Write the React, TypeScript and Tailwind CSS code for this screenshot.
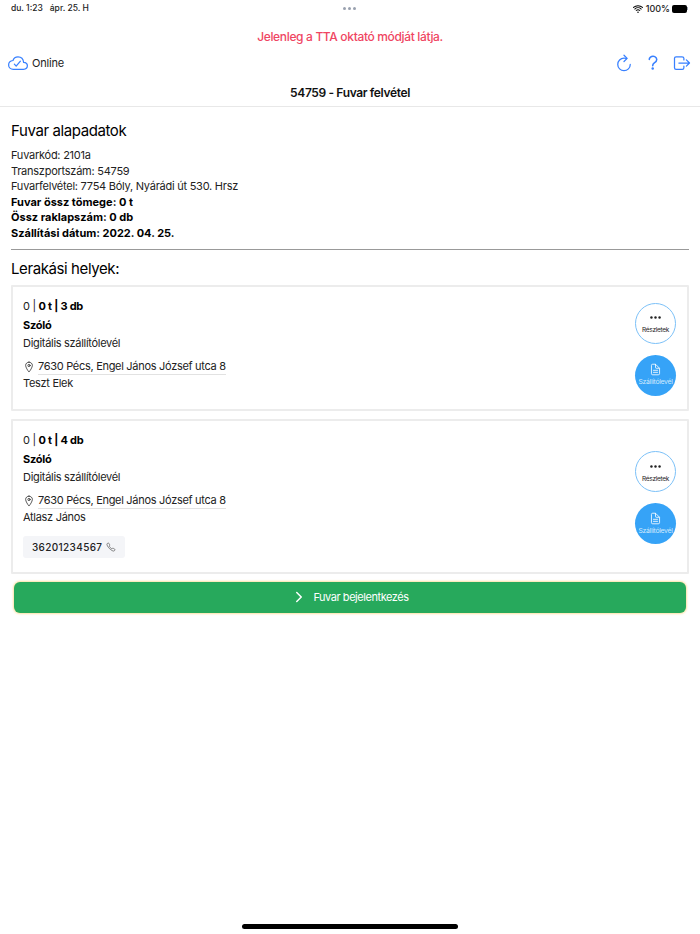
import React from "react";
import {
  IoCallOutline,
  IoChevronForward,
  IoCloudDoneOutline,
  IoDocumentTextOutline,
  IoEllipsisHorizontal,
  IoHelpOutline,
  IoLocationOutline,
  IoLogOutOutline,
  IoRefreshOutline,
  IoWifi,
} from "react-icons/io5";

function StatusBar() {
  return (
    <div className="flex h-[17px] items-center justify-between pl-[11px] pr-[12px] text-[8.5px] font-medium text-[#222]">
      <div className="flex w-[120px] gap-[7px]">
        <span>du. 1:23</span>
        <span>ápr. 25. H</span>
      </div>
      <div className="flex gap-[2px]">
        <span className="h-[3px] w-[3px] rounded-full bg-gray-400" />
        <span className="h-[3px] w-[3px] rounded-full bg-gray-400" />
        <span className="h-[3px] w-[3px] rounded-full bg-gray-400" />
      </div>
      <div className="flex w-[120px] items-center justify-end gap-[1px]">
        <IoWifi className="mr-[1px] text-[12px] text-black" />
        <span className="text-[9px]">100%</span>
        <span className="ml-[1px] flex items-center">
          <span className="h-[8px] w-[15px] rounded-[2px] bg-black" />
          <span className="h-[3px] w-[1px] bg-gray-400" />
        </span>
      </div>
    </div>
  );
}

function RoundButton({ filled }: { filled?: boolean }) {
  if (filled) {
    return (
      <button className="flex h-[41px] w-[41px] flex-col items-center justify-center rounded-full bg-[#36a3f7] text-white">
        <IoDocumentTextOutline className="text-[13px]" />
        <span className="mt-[1px] text-[6.8px] leading-[10px] text-[#cfe9fd]">Szállítólevél</span>
      </button>
    );
  }
  return (
    <button className="flex h-[41px] w-[41px] flex-col items-center justify-center rounded-full border border-[#7cc1f8] bg-white text-[#222]">
      <IoEllipsisHorizontal className="text-[13px]" />
      <span className="mt-[1px] text-[6.5px] leading-[10px]">Részletek</span>
    </button>
  );
}

function StopCard({
  count,
  name,
  phone,
}: {
  count: string;
  name: string;
  phone?: string;
}) {
  return (
    <div className="flex items-center justify-between rounded-[1px] border-2 border-[#ececec] pl-[10px] pr-[11px] text-[11px] leading-[18px] tracking-[-0.3px] text-[#222]">
      <div className="pt-[10px] pb-[7px]">
        <div>
          0 | <b className="tracking-[-0.25px] text-black">0 t | {count} db</b>
        </div>
        <div className="mt-[1px] font-bold tracking-[-0.25px] text-black">Szóló</div>
        <div>Digitális szállítólevél</div>
        <div className="mt-[7px] flex items-center">
          <IoLocationOutline className="mr-[3px] text-[12px]" />
          <span className="border-b border-[#e2e2e2] leading-[15px]">7630 Pécs, Engel János József utca 8</span>
        </div>
        <div className="mt-[-1px]">{name}</div>
        <div className="h-[10px]" />
        {phone && (
          <div className="mb-[7px] flex h-[22px] w-fit items-center gap-[4px] rounded-[3px] bg-[#f4f5f8] px-[9px] text-[10px] font-medium tracking-[0.35px]">
            {phone}
            <IoCallOutline className="text-[10px] text-[#444]" />
          </div>
        )}
      </div>
      <div className="mt-[3px] flex flex-col gap-[11px]">
        <RoundButton />
        <RoundButton filled />
      </div>
    </div>
  );
}

export default function App() {
  return (
    <div className="flex h-[934px] flex-col bg-white font-['Inter',sans-serif] text-[#222]">
      <StatusBar />
      <div className="mt-[12px] text-center text-[12px] font-medium leading-[16px] tracking-[-0.34px] text-[#ef4562]">
        Jelenleg a TTA oktató módját látja.
      </div>
      <div className="mt-[6px] flex h-[24px] items-center pl-[8px] pr-[8px]">
        <IoCloudDoneOutline className="text-[20px] text-[#3880ff]" />
        <span className="ml-[4px] text-[11px] tracking-[-0.2px] text-[#222]">Online</span>
        <div className="ml-auto flex items-center gap-[9px] text-[#3880ff]">
          <IoRefreshOutline className="text-[20px]" />
          <IoHelpOutline className="text-[20px]" />
          <IoLogOutOutline className="text-[20px]" />
        </div>
      </div>
      <div className="mt-[10px] border-b border-[#e8e8e8] pb-[5px] text-center text-[12px] font-semibold leading-[16px] tracking-[-0.36px] text-[#111]">
        54759 - Fuvar felvétel
      </div>
      <div className="px-[11px]">
        <h2 className="mt-[14px] text-[15px] font-normal leading-[20px] tracking-[-0.4px] text-black">Fuvar alapadatok</h2>
        <div className="mt-[7px] border-b border-[#999] pb-[7px] text-[11px] leading-[15.6px] tracking-[-0.25px]">
          <div>Fuvarkód: 2101a</div>
          <div>Transzportszám: 54759</div>
          <div>Fuvarfelvétel: 7754 Bóly, Nyárádi út 530. Hrsz</div>
          <div className="font-bold tracking-normal text-black">Fuvar össz tömege: 0 t</div>
          <div className="font-bold tracking-normal text-black">Össz raklapszám: 0 db</div>
          <div className="font-bold tracking-normal text-black">Szállítási dátum: 2022. 04. 25.</div>
        </div>
        <h2 className="mt-[9px] text-[15px] font-normal leading-[20px] tracking-[-0.4px] text-black">Lerakási helyek:</h2>
        <div className="mt-[6px] flex flex-col gap-[8px]">
          <StopCard count="3" name="Teszt Elek" />
          <StopCard count="4" name="Atlasz János" phone="36201234567" />
        </div>
        <button className="mx-[3px] mt-[8px] flex h-[31px] w-[672px] items-center justify-center rounded-[6px] bg-[#27a95c] text-[11px] tracking-[-0.45px] text-white shadow-[0_0_2px_1px_#fde3a8]">
          <IoChevronForward className="mr-[6px] text-[16px]" />
          Fuvar bejelentkezés
        </button>
      </div>
      <div className="mx-auto mb-[5px] mt-auto h-[5px] w-[216px] rounded-full bg-black" />
    </div>
  );
}
